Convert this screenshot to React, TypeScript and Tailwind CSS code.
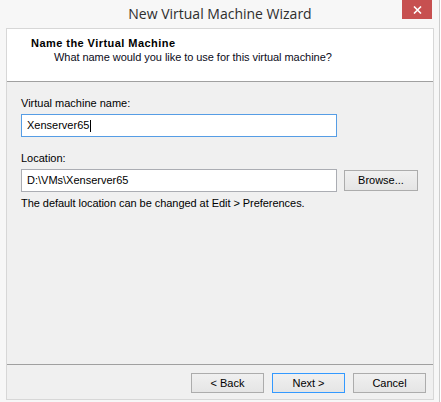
import React from 'react';

const Button: React.FC<{ label: string; primary?: boolean; className?: string }> = ({ label, primary, className = '' }) => (
  <div
    className={`flex items-center justify-center border bg-gradient-to-b from-[#f0f0f0] to-[#e5e5e5] text-[11px] leading-[13px] text-black ${
      primary ? 'border-[#3399ff]' : 'border-[#acacac]'
    } ${className}`}
  >
    {label}
  </div>
);

export default function App() {
  return (
    <div className="w-[441px] h-[402px] bg-white overflow-hidden font-['Liberation_Sans',Arial,sans-serif]">
      <div className="relative w-[440px] h-full bg-[#f7f7f7] border-r border-[#cdcdcd] flex flex-col">
        {/* Title bar */}
        <div className="h-[28px] flex items-center justify-center pl-px">
          <span className="font-['Open_Sans',sans-serif] text-[14px] leading-[18px] text-[#2e2e2e]">
            New Virtual Machine Wizard
          </span>
        </div>
        <div className="absolute top-0 right-[7px] w-[30px] h-[19px] bg-[#c75050] flex items-center justify-center">
          <svg width="9" height="8" viewBox="0 0 9 8">
            <path d="M1 0.5 L8 7.5 M8 0.5 L1 7.5" stroke="#fff" strokeWidth="1.6" />
          </svg>
        </div>

        {/* Client panel */}
        <div className="ml-[6px] w-[428px] h-[372px] border border-[#d7d7d7] flex flex-col">
          <div className="h-[52px] bg-white pt-[8px] pl-[24px] text-[11px] leading-[13px] text-black">
            <div className="font-bold tracking-[0.45px]">Name the Virtual Machine</div>
            <div className="pl-[23px] pt-px text-[#0b0b20] tracking-[-0.05px]">
              What name would you like to use for this virtual machine?
            </div>
          </div>
          <div className="h-px bg-[#a0a0a0]" />

          <div className="flex-1 bg-[#f0f0f0] pl-[14px] pt-[15px] text-[11px] leading-[13px] text-black">
            <div>Virtual machine name:</div>
            <div className="mt-[4px] w-[316px] h-[23px] bg-white border border-[#569de5] flex items-center pl-[5px]">
              <span>Xenserver65</span>
              <span className="ml-px w-px h-[12px] bg-black" />
            </div>

            <div className="mt-[15px]">Location:</div>
            <div className="mt-[4px] flex items-center">
              <div className="w-[316px] h-[23px] bg-white border border-[#abadb3] flex items-center pl-[5px]">
                D:\VMs\Xenserver65
              </div>
              <Button label="Browse..." className="ml-[7px] w-[74px] h-[21px]" />
            </div>

            <div className="mt-[5px] tracking-[-0.05px]">The default location can be changed at Edit &gt; Preferences.</div>
          </div>
          <div className="h-px bg-[#a0a0a0]" />

          <div className="h-[34px] bg-[#f0f0f0] flex justify-end gap-[8px] pt-[8px] pr-[7px]">
            <Button label="< Back" className="w-[73px] h-[20px]" />
            <Button label="Next >" primary className="w-[73px] h-[20px]" />
            <Button label="Cancel" className="w-[73px] h-[20px]" />
          </div>
        </div>
      </div>
    </div>
  );
}
